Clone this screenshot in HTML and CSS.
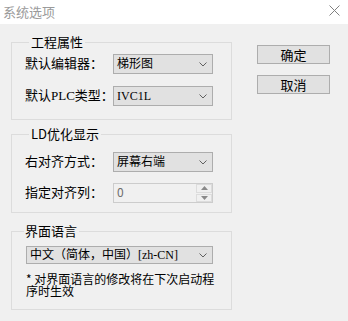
FILE: index.html
```html
<!DOCTYPE html>
<html lang="zh-CN">
<head>
    <meta charset="UTF-8">
    <meta name="viewport" content="width=device-width, initial-scale=1.0">
    <title>系统选项</title>
    <link rel="stylesheet" href="styles.css">
</head>
<body>
    <div class="window">
        <div class="titlebar">
            <span class="title">系统选项</span>
            <svg class="close" width="11" height="11" viewBox="0 0 11 11">
                <path d="M0.5 0.5 L10.5 10.5 M10.5 0.5 L0.5 10.5" stroke="#808080" stroke-width="1" fill="none"/>
            </svg>
        </div>
        <div class="content">
            <div class="groups">
                <fieldset class="group group-project">
                    <legend>工程属性</legend>
                    <div class="row">
                        <span class="label">默认编辑器：</span>
                        <div class="combo">
                            <span class="combo-text">梯形图</span>
                            <svg class="arrow" width="8" height="5" viewBox="0 0 8 5"><path d="M0.5 0.5 L4 4 L7.5 0.5" stroke="#606060" fill="none"/></svg>
                        </div>
                    </div>
                    <div class="row">
                        <span class="label">默认PLC类型：</span>
                        <div class="combo">
                            <span class="combo-text">IVC1L</span>
                            <svg class="arrow" width="8" height="5" viewBox="0 0 8 5"><path d="M0.5 0.5 L4 4 L7.5 0.5" stroke="#606060" fill="none"/></svg>
                        </div>
                    </div>
                </fieldset>

                <fieldset class="group group-ld">
                    <legend>LD优化显示</legend>
                    <div class="row">
                        <span class="label">右对齐方式：</span>
                        <div class="combo">
                            <span class="combo-text">屏幕右端</span>
                            <svg class="arrow" width="8" height="5" viewBox="0 0 8 5"><path d="M0.5 0.5 L4 4 L7.5 0.5" stroke="#606060" fill="none"/></svg>
                        </div>
                    </div>
                    <div class="row">
                        <span class="label">指定对齐列：</span>
                        <div class="spin">
                            <span class="spin-text">0</span>
                            <div class="spin-buttons">
                                <div class="spin-btn"><svg width="7" height="4" viewBox="0 0 7 4"><path d="M3.5 0 L7 4 L0 4 Z" fill="#8a8a8a"/></svg></div>
                                <div class="spin-btn"><svg width="7" height="4" viewBox="0 0 7 4"><path d="M0 0 L7 0 L3.5 4 Z" fill="#8a8a8a"/></svg></div>
                            </div>
                        </div>
                    </div>
                </fieldset>

                <fieldset class="group group-lang">
                    <legend>界面语言</legend>
                    <div class="combo combo-wide">
                        <span class="combo-text">中文（简体，中国）[zh-CN]</span>
                        <svg class="arrow" width="8" height="5" viewBox="0 0 8 5"><path d="M0.5 0.5 L4 4 L7.5 0.5" stroke="#606060" fill="none"/></svg>
                    </div>
                    <p class="note">* 对界面语言的修改将在下次启动程序时生效</p>
                </fieldset>
            </div>
            <div class="buttons">
                <button class="btn">确定</button>
                <button class="btn">取消</button>
            </div>
        </div>
    </div>
</body>
</html>
```

FILE: styles.css
```css
body {
    margin: 0;
    background-color: #f0f0f0;
    font-family: "Liberation Serif", "Noto Sans CJK SC", sans-serif;
    font-size: 12px;
    color: #000;
}
.window {
    width: 348px;
    height: 321px;
    overflow: hidden;
}
.titlebar {
    height: 24px;
    background-color: #fff;
    display: flex;
    align-items: center;
    justify-content: space-between;
    padding: 0 8px 0 3px;
    box-sizing: border-box;
}
.title {
    font-family: "Noto Sans CJK SC", sans-serif;
    font-size: 13px;
    color: #9a9a9a;
    margin-top: -2px;
}
.close {
    margin-top: -4px;
}
.content {
    display: flex;
    padding-left: 11px;
}
.groups {
    width: 221px;
}
.group {
    margin: 0;
    border: 1px solid #dcdcdc;
    padding: 0 0 0 13px;
}
.group legend {
    font-family: "Noto Sans CJK SC", sans-serif;
    font-size: 13px;
    line-height: 16px;
    padding: 0 2px;
    margin-left: 4px;
}
.group-project {
    margin-top: 10px;
    padding-top: 4px;
    padding-bottom: 13px;
}
.group-ld {
    margin-top: 6px;
    padding-top: 10px;
    padding-bottom: 9px;
}
.group-lang {
    margin-top: 10px;
    padding-top: 7px;
    padding-bottom: 12px;
}
.group-lang legend {
    margin-left: -1px;
    padding: 0 2px 0 1px;
}
.row {
    display: flex;
    align-items: center;
    height: 20px;
}
.row + .row {
    margin-top: 12px;
}
.group-ld .row + .row {
    margin-top: 11px;
}
.label {
    width: 88px;
    flex-shrink: 0;
    white-space: nowrap;
    font-size: 13px;
    line-height: 20px;
}
.combo {
    width: 100px;
    height: 20px;
    box-sizing: border-box;
    border: 1px solid #adadad;
    background-color: #e1e1e1;
    display: flex;
    align-items: center;
    justify-content: space-between;
    padding: 0 5px 0 3px;
}
.combo-text {
    line-height: 18px;
}
.combo-wide {
    width: 187px;
    height: 18px;
    margin-left: 1px;
}
.combo-wide .combo-text {
    line-height: 16px;
}
.spin {
    width: 100px;
    height: 20px;
    box-sizing: border-box;
    border: 1px solid #cccccc;
    background-color: #f0f0f0;
    display: flex;
    align-items: stretch;
    justify-content: space-between;
}
.spin-text {
    font-family: "Noto Sans CJK SC", sans-serif;
    color: #6d6d6d;
    line-height: 16px;
    padding-left: 3px;
}
.spin-buttons {
    width: 16px;
    display: flex;
    flex-direction: column;
    gap: 1px;
}
.spin-btn {
    flex: 1;
    display: flex;
    align-items: center;
    justify-content: center;
    background-color: #f0f0f0;
    border: 1px solid #dcdcdc;
}
.note {
    margin: 9px 0 0 1px;
    width: 196px;
    font-family: "Noto Sans CJK SC", sans-serif;
    font-size: 12px;
    line-height: 12px;
}
.buttons {
    display: flex;
    flex-direction: column;
    gap: 11px;
    margin-left: 25px;
    padding-top: 21px;
}
.btn {
    width: 73px;
    height: 19px;
    box-sizing: border-box;
    border: 1px solid #adadad;
    background-color: #e1e1e1;
    font-family: "Noto Sans CJK SC", sans-serif;
    font-size: 13px;
    line-height: 15px;
    padding: 0;
    color: #000;
}
```
